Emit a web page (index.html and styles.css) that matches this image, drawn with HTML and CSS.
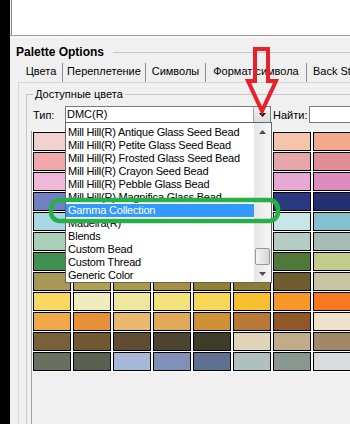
FILE: index.html
```html
<!DOCTYPE html>
<html>
<head>
<meta charset="utf-8">
<link rel="stylesheet" href="styles.css">
</head>
<body>
<div class="screen">
  <div class="blackbar"></div>
  <div class="window">
    <div class="toppanel"></div>
    <div class="topsep"></div>
    <div class="title"><span class="title-text">Palette Options</span><span class="title-line"></span></div>
    <div class="tabs">
      <div class="tab t1 sel">Цвета</div>
      <div class="tab t2">Переплетение</div>
      <div class="tab t3">Символы</div>
      <div class="tab t4">Формат символа</div>
      <div class="tab t5">Back St</div>
    </div>
    <div class="page">
      <fieldset class="group">
        <legend>Доступные цвета</legend>
        <div class="typerow">
          <span class="lbl lbl-type">Тип:</span>
          <div class="combo">
            <span class="combo-val">DMC(R)</span>
            <span class="combo-btn"><svg width="7" height="4" viewBox="0 0 7 4"><path d="M0 0H7L3.5 4Z" fill="#000"/></svg></span>
            <div class="droplist">
              <div class="items">
                <div class="item">Mill Hill(R) Antique Glass Seed Bead</div>
                <div class="item">Mill Hill(R) Petite Glass Seed Bead</div>
                <div class="item">Mill Hill(R) Frosted Glass Seed Bead</div>
                <div class="item">Mill Hill(R) Crayon Seed Bead</div>
                <div class="item">Mill Hill(R) Pebble Glass Bead</div>
                <div class="item">Mill Hill(R) Magnifica Glass Bead</div>
                <div class="item hl">Gamma Collection</div>
                <div class="item">Madeira(R)</div>
                <div class="item">Blends</div>
                <div class="item">Custom Bead</div>
                <div class="item">Custom Thread</div>
                <div class="item">Generic Color</div>
              </div>
              <div class="sb">
                <div class="sb-arrow"><svg width="7" height="4" viewBox="0 0 7 4"><path d="M0 4H7L3.5 0Z" fill="#4d4d4d"/></svg></div>
                <div class="sb-track"></div>
                <div class="sb-thumb"></div>
                <div class="sb-arrow"><svg width="7" height="4" viewBox="0 0 7 4"><path d="M0 0H7L3.5 4Z" fill="#4d4d4d"/></svg></div>
              </div>
            </div>
          </div>
          <span class="lbl lbl-find">Найти:</span>
          <div class="findbox"></div>
        </div>
        <div class="gridpanel">
          <div class="grid">
            <div class="cell" style="background:#f2d2d0"></div><div class="cell" style="background:#f0c8c4"></div><div class="cell" style="background:#f0c8c4"></div><div class="cell" style="background:#f0c8c4"></div><div class="cell" style="background:#f0c8c4"></div><div class="cell" style="background:#f0c8c4"></div><div class="cell" style="background:#f5c5aa"></div><div class="cell" style="background:#f3a98c"></div>
            <div class="cell" style="background:#f0a8aa"></div><div class="cell" style="background:#e8a0a4"></div><div class="cell" style="background:#e8a0a4"></div><div class="cell" style="background:#e8a0a4"></div><div class="cell" style="background:#e8a0a4"></div><div class="cell" style="background:#e8a0a4"></div><div class="cell" style="background:#e6a6aa"></div><div class="cell" style="background:#de8e94"></div>
            <div class="cell" style="background:#f0b8d8"></div><div class="cell" style="background:#e8acd2"></div><div class="cell" style="background:#e8acd2"></div><div class="cell" style="background:#e8acd2"></div><div class="cell" style="background:#e8acd2"></div><div class="cell" style="background:#e8acd2"></div><div class="cell" style="background:#e8a8d4"></div><div class="cell" style="background:#de8cc0"></div>
            <div class="cell" style="background:#7080c0"></div><div class="cell" style="background:#4a5aa0"></div><div class="cell" style="background:#4a5aa0"></div><div class="cell" style="background:#4a5aa0"></div><div class="cell" style="background:#4a5aa0"></div><div class="cell" style="background:#4a5aa0"></div><div class="cell" style="background:#2a3a80"></div><div class="cell" style="background:#233070"></div>
            <div class="cell" style="background:#a8d8e4"></div><div class="cell" style="background:#b0dce4"></div><div class="cell" style="background:#b0dce4"></div><div class="cell" style="background:#b0dce4"></div><div class="cell" style="background:#b0dce4"></div><div class="cell" style="background:#b0dce4"></div><div class="cell" style="background:#c8e6e8"></div><div class="cell" style="background:#84c0d0"></div>
            <div class="cell" style="background:#a8d0b8"></div><div class="cell" style="background:#b0ccc0"></div><div class="cell" style="background:#b0ccc0"></div><div class="cell" style="background:#b0ccc0"></div><div class="cell" style="background:#b0ccc0"></div><div class="cell" style="background:#b0ccc0"></div><div class="cell" style="background:#b4ccc4"></div><div class="cell" style="background:#a4bcb4"></div>
            <div class="cell" style="background:#409050"></div><div class="cell" style="background:#488444"></div><div class="cell" style="background:#488444"></div><div class="cell" style="background:#488444"></div><div class="cell" style="background:#488444"></div><div class="cell" style="background:#488444"></div><div class="cell" style="background:#507838"></div><div class="cell" style="background:#c4cc8c"></div>
            <div class="cell" style="background:#a89858"></div><div class="cell" style="background:#b0a050"></div><div class="cell" style="background:#a89a48"></div><div class="cell" style="background:#a89040"></div><div class="cell" style="background:#908030"></div><div class="cell" style="background:#8a7c34"></div><div class="cell" style="background:#6e5c2c"></div><div class="cell" style="background:#c8c4a4"></div>
            <div class="cell" style="background:#f8d860"></div><div class="cell" style="background:#f0ecc0"></div><div class="cell" style="background:#f0e8a0"></div><div class="cell" style="background:#f4e27c"></div><div class="cell" style="background:#f8d858"></div><div class="cell" style="background:#f8c030"></div><div class="cell" style="background:#f89828"></div><div class="cell" style="background:#f87820"></div>
            <div class="cell" style="background:#f0a848"></div><div class="cell" style="background:#e89038"></div><div class="cell" style="background:#e8b870"></div><div class="cell" style="background:#e0a858"></div><div class="cell" style="background:#d09038"></div><div class="cell" style="background:#b87838"></div><div class="cell" style="background:#905828"></div><div class="cell" style="background:#f0e2cc"></div>
            <div class="cell" style="background:#786038"></div><div class="cell" style="background:#705830"></div><div class="cell" style="background:#604c30"></div><div class="cell" style="background:#4c4430"></div><div class="cell" style="background:#3c3c28"></div><div class="cell" style="background:#e0d4b8"></div><div class="cell" style="background:#c0ac88"></div><div class="cell" style="background:#a08868"></div>
            <div class="cell" style="background:#687060"></div><div class="cell" style="background:#586050"></div><div class="cell" style="background:#a8b8d8"></div><div class="cell" style="background:#8090b8"></div><div class="cell" style="background:#607090"></div><div class="cell" style="background:#b0c0c0"></div><div class="cell" style="background:#889890"></div><div class="cell" style="background:#d8dcdc"></div>
          </div>
        </div>
      </fieldset>
    </div>
  </div>
  <svg class="annot" width="350" height="424" viewBox="0 0 350 424">
    <path d="M255 49H268V81H276L262 111L248 81H255Z" fill="none" stroke="#e8202a" stroke-width="4" stroke-linejoin="miter"/>
    <rect x="51" y="200" width="227" height="21" rx="9" ry="9" fill="none" stroke="#27b04a" stroke-width="4.5"/>
  </svg>
</div>
</body>
</html>
```

FILE: styles.css
```css
html, body {
  margin: 0;
  padding: 0;
}

body {
  width: 350px;
  height: 424px;
  overflow: hidden;
  background: #000;
  font-family: "Liberation Sans", Arial, sans-serif;
  font-size: 11px;
  color: #000;
}

.screen {
  position: relative;
  display: flex;
  width: 350px;
  height: 424px;
  overflow: hidden;
}

.blackbar {
  flex: none;
  width: 10px;
  background: #000;
}

.window {
  flex: 1;
  min-width: 0;
  display: flex;
  flex-direction: column;
  background: #f0f0f0;
}

.toppanel {
  flex: none;
  height: 35px;
  margin-left: 1px;
  background: #fff;
  border-left: 1px solid #8a8a8a;
}

.topsep {
  flex: none;
  height: 1px;
  border-top: 1px solid #a0a0a0;
  border-bottom: 1px solid #ffffff;
}

.title {
  flex: none;
  display: flex;
  align-items: center;
  height: 14px;
  margin: 7px 0 0 6px;
}

.title-text {
  font-size: 12px;
  font-weight: bold;
  line-height: 14px;
  white-space: nowrap;
}

.title-line {
  flex: 1;
  height: 0;
  border-top: 1px solid #c8c8c8;
  margin-left: 9px;
}

.tabs {
  flex: none;
  display: flex;
  height: 19px;
  margin: 4px 0 0 10px;
  overflow: hidden;
}

.tab {
  flex: none;
  box-sizing: border-box;
  height: 19px;
  line-height: 17px;
  text-align: center;
  white-space: nowrap;
  border-right: 1px solid #8c8c8c;
}

.t1 { width: 43px; }
.t2 { width: 83px; }
.t3 { width: 60px; }
.t4 { width: 101px; }
.t5 { flex: 1; text-align: left; padding-left: 6px; border-right: none; }

.page {
  flex: 1;
  min-height: 0;
  margin-left: 8px;
  border-left: 1px solid #d8d8d8;
  border-top: 1px solid #d8d8d8;
  padding: 5px 0 0 7px;
}

.group {
  margin: 0;
  padding: 0 0 0 4px;
  min-width: 0;
  height: 100%;
  box-sizing: border-box;
  border: none;
  border-top: 1px solid #c8c8c8;
  border-left: 1px solid #c8c8c8;
}

.group legend {
  margin-left: 2px;
  padding: 0 2px;
  line-height: 13px;
}

.typerow {
  display: flex;
  align-items: center;
  height: 17px;
  margin-top: 5px;
}

.lbl {
  flex: none;
  white-space: nowrap;
}

.lbl-type {
  box-sizing: border-box;
  width: 34px;
  padding-left: 2px;
}

.lbl-find {
  margin-left: 2px;
}

.combo {
  position: relative;
  flex: none;
  box-sizing: border-box;
  width: 206px;
  height: 17px;
  border: 1px solid #7a7a7a;
  background: #fff;
  display: flex;
  align-items: center;
}

.combo-val {
  flex: 1;
  padding-left: 1px;
  line-height: 15px;
}

.combo-btn {
  flex: none;
  box-sizing: border-box;
  width: 17px;
  height: 15px;
  display: flex;
  align-items: center;
  justify-content: center;
  background: linear-gradient(#f2f2f2, #dcdcdc);
  border-left: 1px solid #a8a8a8;
}

.droplist {
  position: absolute;
  left: -1px;
  top: 15px;
  box-sizing: border-box;
  width: 207px;
  height: 161px;
  border: 1px solid #646464;
  background: #fff;
  display: flex;
  z-index: 2;
}

.items {
  flex: 1;
  min-width: 0;
  overflow: hidden;
  padding-top: 3px;
}

.item {
  height: 13px;
  line-height: 13px;
  padding-left: 2px;
  letter-spacing: -0.2px;
  white-space: nowrap;
}

.item.hl {
  background: #3399ff;
  color: #fff;
}

.sb {
  flex: none;
  width: 17px;
  display: flex;
  flex-direction: column;
  background: linear-gradient(to right, #e6e6e6, #f6f6f6);
}

.sb-arrow {
  flex: none;
  height: 17px;
  display: flex;
  align-items: center;
  justify-content: center;
}

.sb-track {
  flex: 1;
}

.sb-thumb {
  flex: none;
  height: 15px;
  margin: 0 1px;
  border: 1px solid #989898;
  border-radius: 2px;
  background: linear-gradient(to right, #f4f4f4, #d6d6d6);
}

.findbox {
  flex: 1;
  height: 17px;
  margin-left: 2px;
  box-sizing: border-box;
  border: 1px solid #7a7a7a;
  border-right: none;
  background: #fff;
}

.gridpanel {
  margin-top: 8px;
  height: 100%;
  border-left: 1px solid #a0a0a0;
}

.grid {
  display: grid;
  grid-template-columns: repeat(8, 38px);
  grid-auto-rows: 19px;
  column-gap: 2px;
  row-gap: 1px;
  padding: 1px;
  background: #fff;
  width: max-content;
}

.cell {
  box-sizing: border-box;
  border: 1px solid #000;
}

.annot {
  position: absolute;
  left: 0;
  top: 0;
  pointer-events: none;
  z-index: 5;
}
```
